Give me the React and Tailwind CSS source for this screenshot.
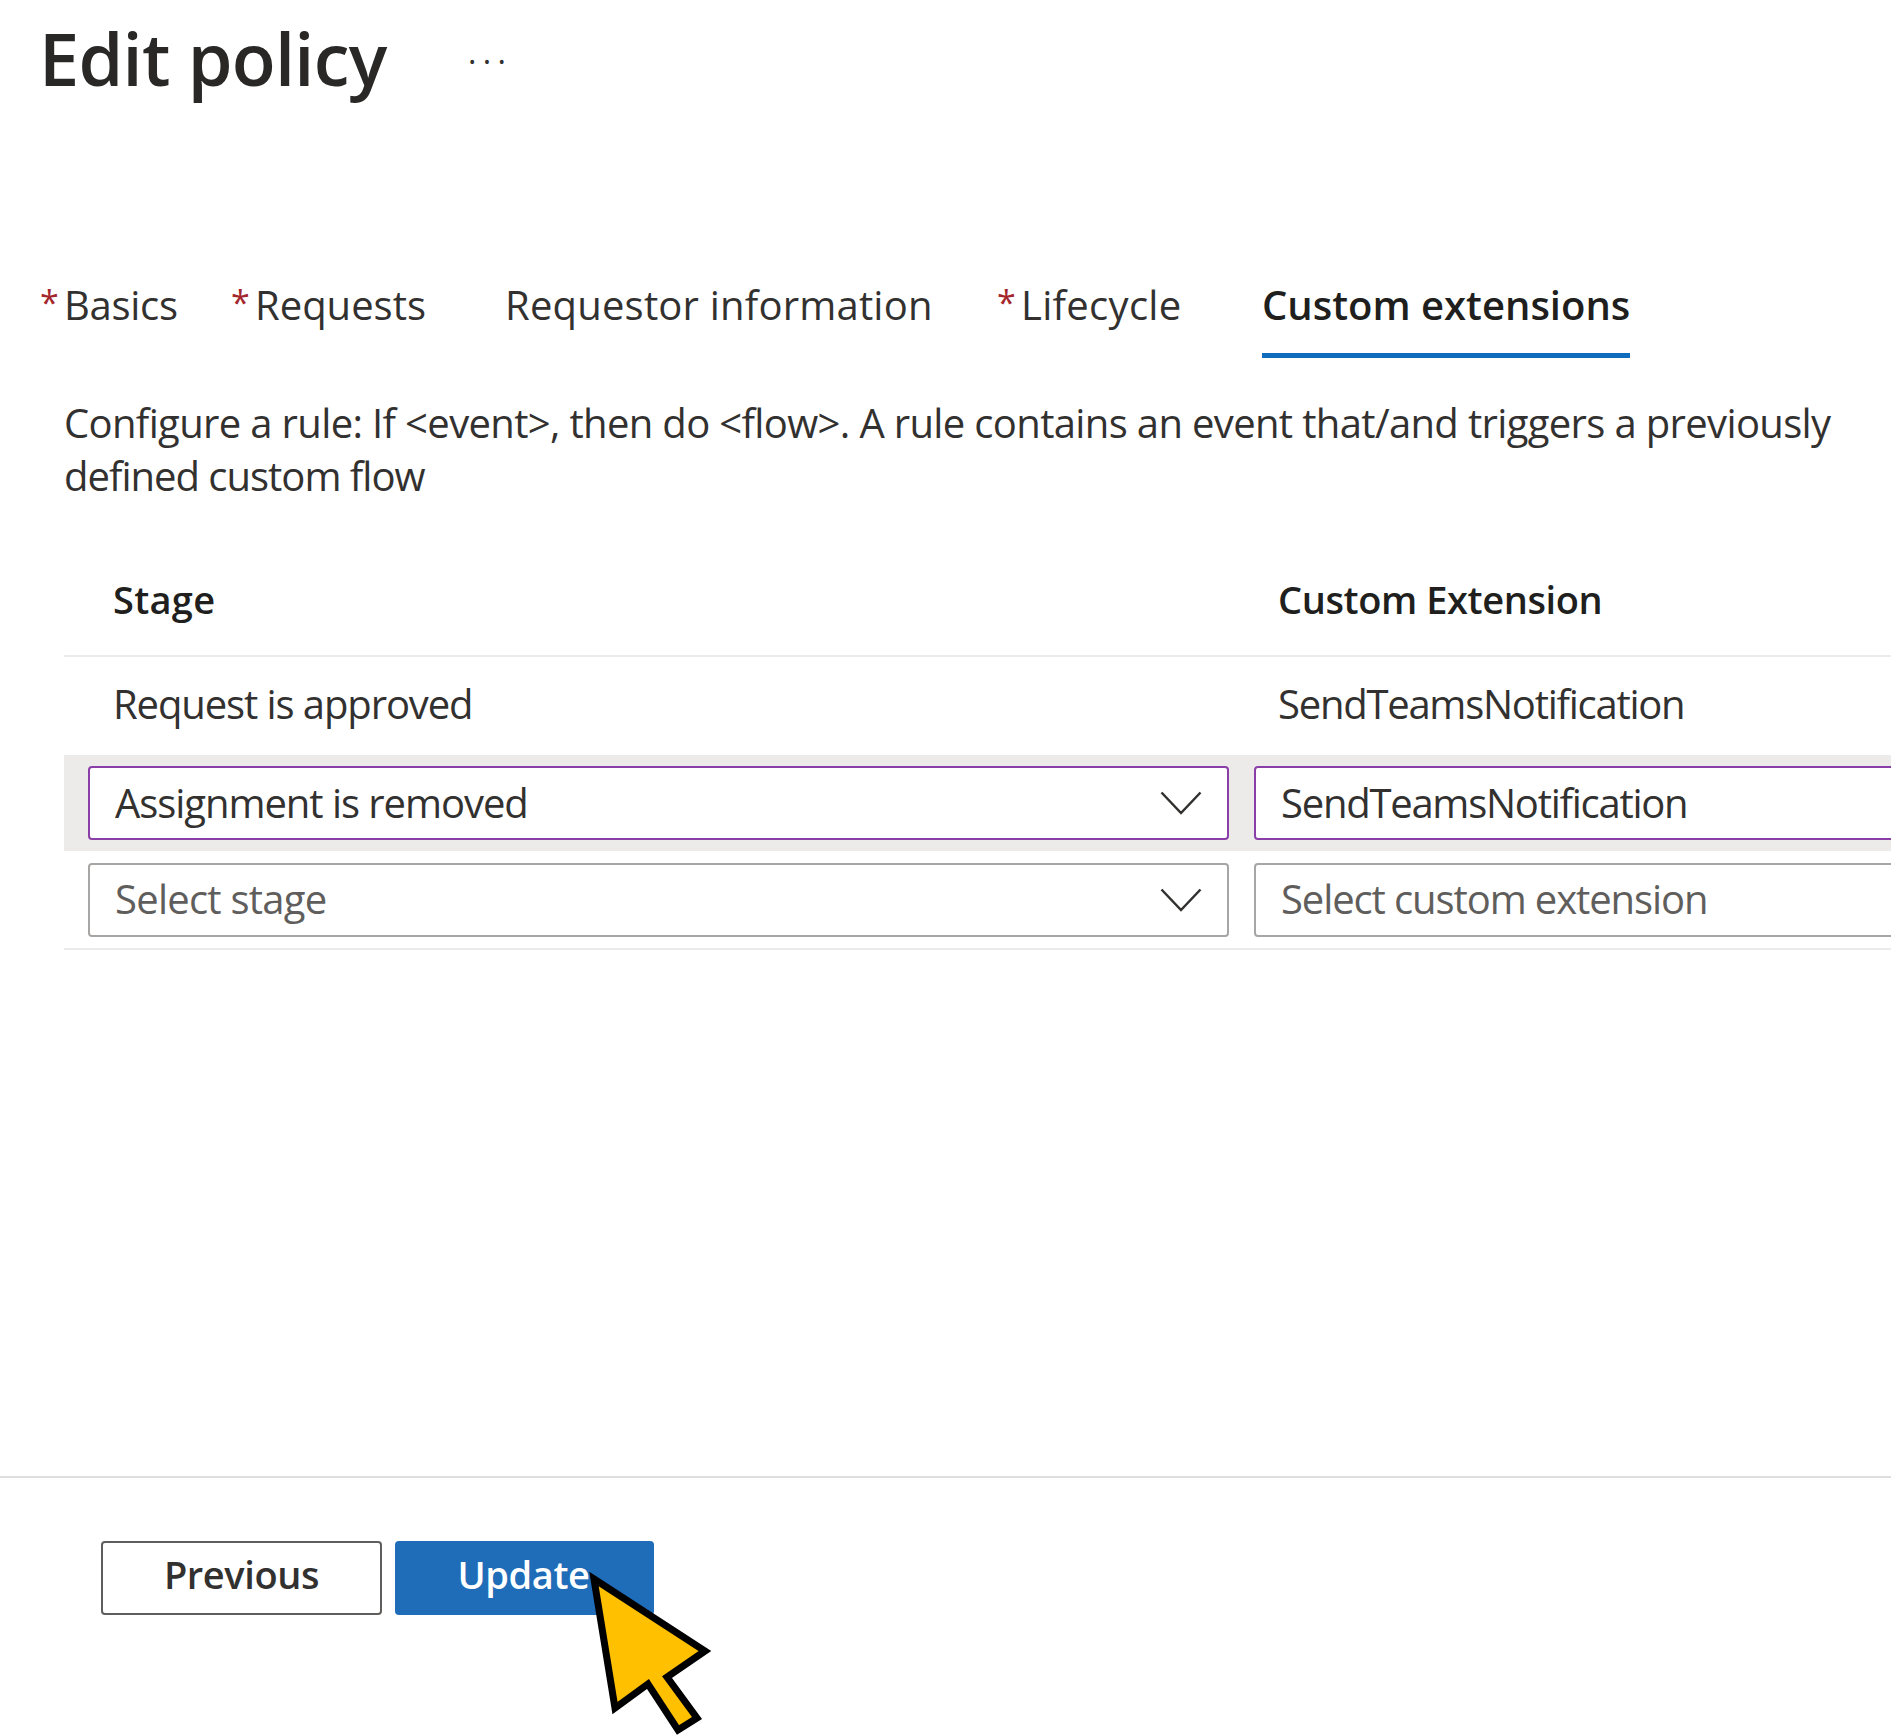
function Chevron() {
  return (
    <svg className="w-[42px] h-[24px] shrink-0" viewBox="0 0 42 24" fill="none">
      <polyline points="1.5,1.5 21,22 40.5,1.5" stroke="#323130" strokeWidth="2.5" />
    </svg>
  )
}

function Tab({ label, required, active, className, labelClass }) {
  return (
    <div className={`flex h-[80px] items-start ${className}`}>
      {required && <span className="w-[24px] text-[34px] leading-[48px] text-[#a4262c]">*</span>}
      <span
        className={`h-full text-[40px] leading-[54px] ${labelClass} ${
          active ? 'border-b-[5px] border-[#0f6cbd] font-semibold text-[#201f1e]' : 'text-[#323130]'
        }`}
      >
        {label}
      </span>
    </div>
  )
}

function Field({ label, placeholder, focused, chevron, className, labelClass }) {
  return (
    <div
      className={`flex h-[74px] items-center justify-between rounded-[4px] border-2 bg-white pl-[25px] pr-[25px] text-[40px] ${
        focused ? 'border-[#8a3ea8] text-[#323130]' : 'border-[#a8a6a4] text-[#605e5c]'
      } ${className}`}
    >
      <span className={`-mt-[1px] ${labelClass}`}>{label || placeholder}</span>
      {chevron && <Chevron />}
    </div>
  )
}

function Cursor() {
  return (
    <svg className="absolute left-[586px] top-[1566px] h-[170px] w-[130px]" viewBox="586 1566 130 170">
      <polygon
        points="594,1579 705,1651 667,1677 697,1718 678,1730 648,1684 615,1708"
        fill="#ffc000"
        stroke="#000"
        strokeWidth="7"
        strokeLinejoin="miter"
      />
    </svg>
  )
}

export default function App() {
  return (
    <div className="relative flex h-[1736px] w-full flex-col overflow-hidden bg-white font-['Open_Sans',sans-serif] text-[#323130]">
      <div className="flex items-center pl-[39px] pt-[14px]">
        <h1 className="w-[429px] text-[72px] font-semibold leading-[88px] tracking-[-0.01em] text-[#292827]">
          Edit policy
        </h1>
        <span className="mb-[12px] text-[32px] leading-[40px] tracking-[0.2em] text-[#323130]">...</span>
      </div>

      <div className="mt-[176px] flex pl-[40px]">
        <Tab label="Basics" required className="w-[191px]" labelClass="tracking-[-0.3px]" />
        <Tab label="Requests" required className="w-[274px]" />
        <Tab label="Requestor information" className="w-[492px]" labelClass="tracking-[0.2px]" />
        <Tab label="Lifecycle" required className="w-[265px]" labelClass="tracking-[0.3px]" />
        <Tab label="Custom extensions" active />
      </div>

      <p className="mt-[38px] pl-[64px] text-[40px] leading-[53px]">
        <span className="tracking-[-0.65px]">
          Configure a rule: If &lt;event&gt;, then do &lt;flow&gt;. A rule contains an event that/and triggers a previously
        </span>
        <br />
        <span className="tracking-[-1px]">defined custom flow</span>
      </p>

      <div className="ml-[64px] mt-[41px]">
        <div className="grid h-[114px] grid-cols-[1165px_1fr] items-center border-b-2 border-[#edebe9] pl-[49px] text-[38px] font-semibold text-[#201f1e]">
          <span className="tracking-[0.3px]">Stage</span>
          <span className="tracking-[-0.4px]">Custom Extension</span>
        </div>
        <div className="grid h-[98px] grid-cols-[1165px_1fr] items-center pb-[5px] pl-[49px] text-[40px] tracking-[-1.25px]">
          <span className="tracking-[-1.1px]">Request is approved</span>
          <span>SendTeamsNotification</span>
        </div>
        <div className="flex h-[96px] items-center gap-[25px] bg-[#edebe9] pl-[24px]">
          <Field label="Assignment is removed" focused chevron className="w-[1141px] shrink-0" labelClass="tracking-[-1.05px]" />
          <Field label="SendTeamsNotification" focused className="w-[1000px] shrink-0" labelClass="tracking-[-1.25px]" />
        </div>
        <div className="flex h-[99px] items-center gap-[25px] border-b-2 border-[#edebe9] pl-[24px]">
          <Field placeholder="Select stage" chevron className="w-[1141px] shrink-0" labelClass="tracking-[-0.75px]" />
          <Field placeholder="Select custom extension" className="w-[1000px] shrink-0" labelClass="tracking-[-1.1px]" />
        </div>
      </div>

      <div className="mt-[526px] flex gap-[13px] border-t-2 border-[#e1dfdd] pl-[101px] pt-[63px]">
        <button className="h-[74px] w-[281px] rounded-[4px] border-2 border-[#605e5c] bg-white pb-[8px] text-[38px] font-semibold tracking-[-0.4px] text-[#323130]">
          Previous
        </button>
        <button className="h-[74px] w-[259px] rounded-[4px] bg-[#1f6cb9] pb-[8px] pr-[2px] text-[38px] font-semibold tracking-[-0.4px] text-white">
          Update
        </button>
      </div>

      <Cursor />
    </div>
  )
}
